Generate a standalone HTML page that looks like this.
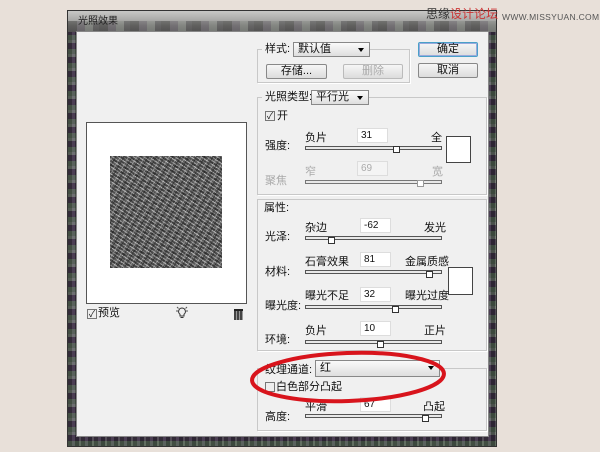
<!DOCTYPE html>
<html><head><meta charset="utf-8"><style>
*{margin:0;padding:0;box-sizing:border-box}
body{width:600px;height:452px;background:#e8e0d9;position:relative;overflow:hidden;font-family:"Liberation Sans","Noto Sans CJK SC",sans-serif;font-size:11px;line-height:13px;color:#111}
.a{position:absolute}
.frame{left:67px;top:10px;width:430px;height:437px;background:repeating-linear-gradient(0deg,rgba(90,110,90,.5) 0 5px,rgba(60,40,70,.5) 5px 11px,rgba(140,150,140,.4) 11px 14px),repeating-linear-gradient(90deg,#2a2e2a 0 4px,#5a5560 4px 7px,#1e2220 7px 11px,#6a7068 11px 13px);border:1px solid #333}
.title{left:68px;top:11px;width:428px;height:21px;background:linear-gradient(#c8c8c6,#a8a8a6 45%,#7a7878 70%,#5a5a5a)}
.title2{left:68px;top:21px;width:428px;height:11px;background:repeating-linear-gradient(90deg,#4a4a48 0 9px,#6e6a70 9px 17px,#8a9088 17px 25px,#555 25px 31px);opacity:.55}
.inner{left:76px;top:31px;width:413px;height:406px;background:#f0f0f0;border:1px solid #888}
.grp{position:absolute;border:1px solid #c8c8c8;box-shadow:1px 1px 0 #fff}
.btn{position:absolute;height:15px;border:1px solid #888;border-radius:2px;background:linear-gradient(#f6f6f6,#dcdcdc);text-align:center;line-height:13px;font-size:11px}
.dd{position:absolute;height:15px;border:1px solid #888;background:linear-gradient(#fafafa,#dedede);line-height:13px;padding-left:4px}
.dd:after{content:"";position:absolute;right:5px;top:5px;border:3px solid transparent;border-top:4px solid #000}
.inp{position:absolute;width:31px;height:15px;background:#fff;border:1px solid #ddd;font-size:10px;padding:0 3px;line-height:13px}
.sl{position:absolute;left:305px;width:137px;height:4px;border:1px solid #555;background:#e8e8e8}
.th{position:absolute;width:7px;height:7px;background:#fff;border:1px solid #333}
.sw{position:absolute;background:#fff;border:1px solid #444}
.cb{position:absolute;width:10px;height:10px;border:1px solid #777;background:#eee;font-size:9px;line-height:8px;text-align:center}
.dis{color:#aaa}
</style></head><body>
<div class="a frame"></div>
<div class="a title"></div>
<div class="a title2"></div>
<div class="a" style="left:78px;top:15px;font-size:10px;color:#222">光照效果</div>
<div class="a inner"></div>
<div class="a" style="left:426px;top:8px;font-size:12px;color:#333">思缘<span style="color:#c33">设计论坛</span></div>
<div class="a" style="left:502px;top:11px;font-size:8.5px;color:#555;letter-spacing:.3px">WWW.MISSYUAN.COM</div>

<div class="a" style="left:86px;top:122px;width:161px;height:182px;background:#fff;border:1px solid #555"></div>
<div class="a" style="left:110px;top:156px;width:112px;height:112px;background:repeating-linear-gradient(35deg,#4a4a4a 0 2px,#9a9a9a 2px 3px,#5a5a5a 3px 5px,#b0b0b0 5px 6px),#666"></div>
<div class="a" style="left:110px;top:156px;width:112px;height:112px;background:repeating-linear-gradient(-60deg,rgba(30,30,30,.5) 0 1px,transparent 1px 3px,rgba(200,200,200,.4) 3px 4px,transparent 4px 7px),repeating-linear-gradient(10deg,rgba(0,0,0,.25) 0 2px,transparent 2px 5px)"></div>
<div class="cb" style="left:87px;top:309px">✓</div><div class="a" style="left:98px;top:307px">预览</div>
<svg class="a" style="left:175px;top:306px" width="14" height="14"><path d="M7 2a3.5 3.5 0 0 0-2 6.3V10h4V8.3A3.5 3.5 0 0 0 7 2zM5.5 11.5h3" fill="none" stroke="#333"/><path d="M1 5h2M11 5h2M2 1l1.5 1.5M12 1l-1.5 1.5" stroke="#555"/></svg>
<div class="a" style="left:234px;top:309px;width:9px;height:11px;background:repeating-linear-gradient(90deg,#444 0 2px,#999 2px 3px);border-top:2px solid #222"></div>

<div class="grp" style="left:257px;top:49px;width:153px;height:34px"></div>
<div class="a" style="left:262px;top:43px;background:#f0f0f0;padding:0 3px">样式:</div>
<div class="dd" style="left:293px;top:42px;width:77px">默认值</div>
<div class="btn" style="left:266px;top:64px;width:61px">存储...</div>
<div class="btn dis" style="left:343px;top:64px;width:60px;border-color:#bbb">删除</div>
<div class="btn" style="left:418px;top:42px;width:60px;border-color:#4aa0c8;box-shadow:inset 0 0 0 1px #9ad">确定</div>
<div class="btn" style="left:418px;top:63px;width:60px">取消</div>

<div class="grp" style="left:257px;top:97px;width:230px;height:98px"></div>
<div class="a" style="left:262px;top:91px;background:#f0f0f0;padding:0 3px">光照类型:</div>
<div class="dd" style="left:311px;top:90px;width:58px">平行光</div>
<div class="cb" style="left:265px;top:111px">✓</div><div class="a" style="left:277px;top:110px">开</div>
<div class="a" style="left:265px;top:140px">强度:</div>
<div class="a" style="left:305px;top:132px">负片</div>
<div class="inp" style="left:357px;top:128px">31</div>
<div class="a" style="left:431px;top:132px">全</div>
<div class="sl" style="top:146px"></div><div class="th" style="left:393px;top:146px"></div>
<div class="sw" style="left:446px;top:136px;width:25px;height:27px"></div>
<div class="a dis" style="left:265px;top:175px">聚焦</div>
<div class="a dis" style="left:305px;top:166px">窄</div>
<div class="inp dis" style="left:357px;top:161px;background:#f4f4f4">69</div>
<div class="a dis" style="left:432px;top:166px">宽</div>
<div class="sl" style="top:180px;border-color:#777"></div><div class="th" style="left:417px;top:180px;border-color:#999"></div>

<div class="grp" style="left:257px;top:199px;width:230px;height:152px"></div>
<div class="a" style="left:264px;top:202px">属性:</div>
<div class="a" style="left:265px;top:231px">光泽:</div>
<div class="a" style="left:305px;top:222px">杂边</div>
<div class="inp" style="left:360px;top:218px">-62</div>
<div class="a" style="left:424px;top:222px">发光</div>
<div class="sl" style="top:236px"></div><div class="th" style="left:328px;top:237px"></div>
<div class="a" style="left:265px;top:266px">材料:</div>
<div class="a" style="left:305px;top:256px">石膏效果</div>
<div class="inp" style="left:360px;top:252px">81</div>
<div class="a" style="left:405px;top:256px">金属质感</div>
<div class="sl" style="top:270px"></div><div class="th" style="left:426px;top:271px"></div>
<div class="sw" style="left:448px;top:267px;width:25px;height:28px"></div>
<div class="a" style="left:265px;top:300px">曝光度:</div>
<div class="a" style="left:305px;top:290px">曝光不足</div>
<div class="inp" style="left:360px;top:287px">32</div>
<div class="a" style="left:405px;top:290px">曝光过度</div>
<div class="sl" style="top:305px"></div><div class="th" style="left:392px;top:306px"></div>
<div class="a" style="left:265px;top:334px">环境:</div>
<div class="a" style="left:305px;top:325px">负片</div>
<div class="inp" style="left:360px;top:321px">10</div>
<div class="a" style="left:424px;top:325px">正片</div>
<div class="sl" style="top:340px"></div><div class="th" style="left:377px;top:341px"></div>

<div class="grp" style="left:257px;top:368px;width:230px;height:63px"></div>
<div class="a" style="left:262px;top:364px;background:#f0f0f0;padding:0 3px">纹理通道:</div>
<div class="dd" style="left:315px;top:360px;width:125px;height:17px;line-height:15px">红</div>
<div class="cb" style="left:265px;top:382px"></div><div class="a" style="left:276px;top:381px">白色部分凸起</div>
<div class="a" style="left:265px;top:411px">高度:</div>
<div class="a" style="left:305px;top:401px">平滑</div>
<div class="inp" style="left:360px;top:397px">67</div>
<div class="a" style="left:423px;top:401px">凸起</div>
<div class="sl" style="top:414px"></div><div class="th" style="left:422px;top:415px"></div>

<svg class="a" style="left:0;top:0" width="600" height="452"><ellipse cx="348" cy="377" rx="96" ry="24" fill="none" stroke="#d8141c" stroke-width="4" transform="rotate(-2 348 377)"/></svg>
</body></html>
